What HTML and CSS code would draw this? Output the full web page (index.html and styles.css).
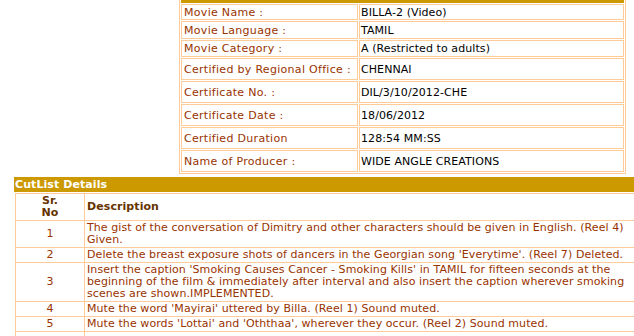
FILE: index.html
```html
<!DOCTYPE html>
<html>
<head>
<meta charset="utf-8">
<link rel="stylesheet" href="styles.css">
</head>
<body>
<table class="info">
  <tr><td class="head" colspan="2"></td></tr>
  <tr class="r16"><td class="lbl">Movie Name :</td><td class="val">BILLA-2 (Video)</td></tr>
  <tr class="r18"><td class="lbl">Movie Language :</td><td class="val">TAMIL</td></tr>
  <tr class="r17"><td class="lbl">Movie Category :</td><td class="val">A (Restricted to adults)</td></tr>
  <tr class="r22"><td class="lbl">Certified by Regional Office :</td><td class="val">CHENNAI</td></tr>
  <tr class="r22"><td class="lbl">Certificate No. :</td><td class="val">DIL/3/10/2012-CHE</td></tr>
  <tr class="r22"><td class="lbl">Certificate Date :</td><td class="val">18/06/2012</td></tr>
  <tr class="r22"><td class="lbl">Certified Duration</td><td class="val">128:54 MM:SS</td></tr>
  <tr class="r22"><td class="lbl">Name of Producer :</td><td class="val">WIDE ANGLE CREATIONS</td></tr>
</table>
<div class="bar">CutList Details</div>
<table class="cuts">
  <tr><th class="sr">Sr.<br>No</th><th class="desc">Description</th></tr>
  <tr><td class="num">1</td><td>The gist of the conversation of Dimitry and other characters should be given in English. (Reel 4) Given.</td></tr>
  <tr><td class="num">2</td><td>Delete the breast exposure shots of dancers in the Georgian song 'Everytime'. (Reel 7) Deleted.</td></tr>
  <tr><td class="num">3</td><td>Insert the caption 'Smoking Causes Cancer - Smoking Kills' in TAMIL for fifteen seconds at the beginning of the film &amp; immediately after interval and also insert the caption wherever smoking scenes are shown.IMPLEMENTED.</td></tr>
  <tr><td class="num">4</td><td>Mute the word 'Mayirai' uttered by Billa. (Reel 1) Sound muted.</td></tr>
  <tr><td class="num">5</td><td>Mute the words 'Lottai' and 'Oththaa', wherever they occur. (Reel 2) Sound muted.</td></tr>
  <tr><td class="num">&nbsp;</td><td>&nbsp;</td></tr>
</table>
</body>
</html>
```

FILE: styles.css
```css
html, body {
  margin: 0;
  padding: 0;
  background: #ffffff;
  overflow: hidden;
}
body {
  font-family: "DejaVu Sans", Verdana, sans-serif;
  font-size: 11px;
  letter-spacing: 0.08px;
}
.info {
  margin: -19px 0 0 179px;
  width: 447px;
  border: 1px solid #FFCC99;
  border-spacing: 1px;
  border-collapse: separate;
}
.info td {
  border: 1px solid #FFCC99;
  padding: 0 2px;
  line-height: 13px;
  vertical-align: middle;
  box-sizing: border-box;
}
.info td.head {
  height: 20px;
  background: #CC9900;
  border-color: #CC9900;
}
.info td.lbl {
  width: 177px;
  color: #993300;
  padding-left: 2px;
  letter-spacing: 0.3px;
}
.info td.val {
  color: #000000;
  padding-left: 1px;
}
.r16 td { height: 16px; }
.r17 td { height: 17px; }
.r18 td { height: 18px; }
.r22 td { height: 22px; }
.bar {
  margin: 3px 0 1px 14px;
  height: 15px;
  line-height: 15px;
  background: #CC9900;
  color: #ffffff;
  font-weight: bold;
  padding-left: 1px;
  white-space: nowrap;
}
.cuts {
  margin-left: 15px;
  width: 640px;
  border-collapse: collapse;
}
.cuts th, .cuts td {
  border: 1px solid #FFCC99;
  padding: 1px 2px;
  line-height: 12px;
  color: #993300;
  text-align: left;
  vertical-align: middle;
}
.cuts th {
  color: #663300;
  font-weight: bold;
}
.cuts th.sr {
  width: 64px;
  text-align: center;
}
.cuts td.num {
  text-align: center;
}
```
